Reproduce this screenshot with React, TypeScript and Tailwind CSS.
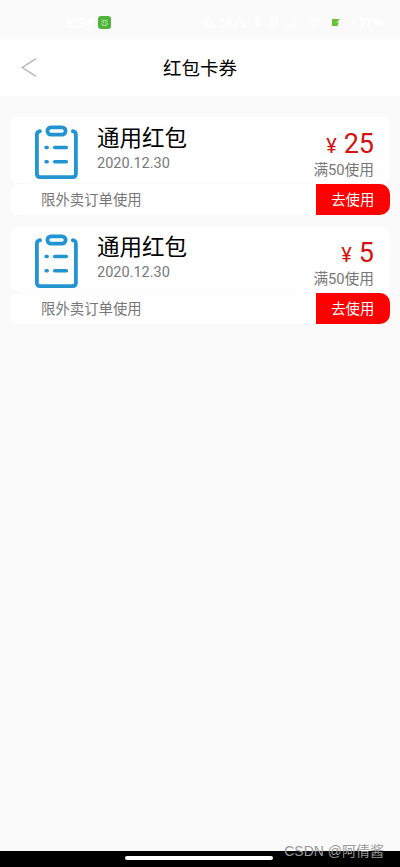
import { Bluetooth, BellOff, SignalHigh, Wifi } from "lucide-react";

const coupons = [
  { id: 1, title: "通用红包", date: "2020.12.30", amount: 25, condition: "满50使用", note: "限外卖订单使用" },
  { id: 2, title: "通用红包", date: "2020.12.30", amount: 5, condition: "满50使用", note: "限外卖订单使用" },
];

function ClipboardIcon() {
  return (
    <svg
      className="h-[56px] w-[44px] shrink-0"
      viewBox="0 0 44 56"
      fill="none"
      stroke="#2394d2"
      strokeWidth="3.8"
      strokeLinecap="round"
      strokeLinejoin="round"
    >
      <path d="M5 6.2C2.6 6.6 1.9 7.8 1.9 9.8V48.8Q1.9 52.2 5.3 52.2H37.5Q40.9 52.2 40.9 48.8V9.8C40.9 7.8 40.2 6.6 37.8 6.2" />
      <rect x="12.4" y="2.4" width="18.2" height="7.2" rx="3.6" />
      <path d="M11 22.5H12.3M19.6 22.5H31.4M11 36.8H12.3M19.6 36.8H31.4" strokeWidth="3.4" />
    </svg>
  );
}

function StatusBar() {
  return (
    <div className="flex h-[39px] items-center pt-[5px] text-[14px] font-bold text-white">
      <span className="ml-[65px] w-[33px]">9:38</span>
      <svg className="h-[13px] w-[13px]" viewBox="0 0 13 13" fill="none">
        <rect width="13" height="13" rx="3" fill="#4fb53a" />
        <path d="M3.5 5.5Q6.5 3.3 9.5 5.5M4 3.5L4.8 4.5M9 3.5L8.2 4.5M3.5 7.5Q4 9.7 6.5 9.5Q9.5 9.5 9.5 7" stroke="#d9f5d0" strokeWidth="0.8" />
        <path d="M5 6.7H5.8M7.3 6.7H8.1" stroke="#fff" />
      </svg>
      <span className="ml-[94px] w-[46px] whitespace-nowrap font-medium">0.0K/s</span>
      <Bluetooth className="h-3 w-3" strokeWidth={3} />
      <BellOff className="ml-[5px] h-3 w-3" strokeWidth={3} />
      <SignalHigh className="ml-[4px] h-4 w-4" strokeWidth={3} />
      <Wifi className="ml-[7px] h-3.5 w-3.5" strokeWidth={3} />
      <div className="ml-[11px] flex h-[7px] w-[22px] rounded-xs border-r border-white">
        <svg className="h-[7px] w-[8px]" viewBox="0 0 8 7">
          <path d="M0 0H8L4.5 3.5H7L5.5 7H0Z" fill="#66c238" />
        </svg>
      </div>
      <span className="ml-[4px] text-[12px]">37%</span>
    </div>
  );
}

function Header() {
  return (
    <header className="grid h-[57px] grid-cols-[1fr_auto_1fr] items-center bg-white">
      <svg className="ml-[21px] h-[20px] w-[16px]" viewBox="0 0 16 20" fill="none" stroke="#b5b5b5" strokeWidth="1.4">
        <path d="M15 0.7L1.2 9.5L15 18.3" />
      </svg>
      <h1 className="text-[18.5px] leading-none text-black">红包卡券</h1>
    </header>
  );
}

function CouponCard({ coupon }: { coupon: (typeof coupons)[number] }) {
  return (
    <li className="text-[14.4px] leading-none text-[#777]">
      <div className="flex h-[66px] rounded-[10px] bg-white pr-[16px] pl-[25px]">
        <div className="pt-[8px]">
          <ClipboardIcon />
        </div>
        <div className="ml-[18px] flex-1 pt-[7px]">
          <h2 className="text-[22.5px] leading-[24px] text-black">{coupon.title}</h2>
          <p className="mt-[8px] font-['Roboto',sans-serif] text-[14.5px] leading-[16px]">{coupon.date}</p>
        </div>
        <div className="text-right">
          <p className="flex h-[39px] items-baseline justify-end pt-[13px] font-['Roboto',sans-serif] text-[#d3130f]">
            <span className="mr-[7px] text-[20px]">¥</span>
            <span className="text-[27px] leading-[28px]">{coupon.amount}</span>
          </p>
          <p className="mt-[6px] font-['Roboto','Noto_Sans_CJK_SC',sans-serif] text-[14.7px] leading-[16px]">
            {coupon.condition}
          </p>
        </div>
      </div>
      <div className="mt-px flex h-[31px] items-center overflow-hidden rounded-[10px] bg-white">
        <span className="flex-1 pl-[31px]">{coupon.note}</span>
        <button className="h-full w-[74.5px] bg-[#fe0000] text-white">去使用</button>
      </div>
    </li>
  );
}

export default function App() {
  return (
    <div className="flex h-[867px] w-[400px] flex-col overflow-hidden bg-[#fafafa] font-['Noto_Sans_CJK_SC',sans-serif]">
      <StatusBar />
      <Header />
      <ul className="flex flex-1 flex-col gap-[10.5px] px-[10px] pt-[21px]">
        {coupons.map((coupon) => (
          <CouponCard key={coupon.id} coupon={coupon} />
        ))}
      </ul>
      <footer className="relative flex h-[16px] justify-center bg-black pt-[5px]">
        <div className="mr-[2px] h-[4px] w-[148px] rounded-full bg-white" />
        <span className="absolute right-[16px] bottom-[9px] font-['Liberation_Sans','Noto_Sans_CJK_SC',sans-serif] text-[14px] leading-[14px] text-[#999]">
          CSDN @阿倩酱
        </span>
      </footer>
    </div>
  );
}
